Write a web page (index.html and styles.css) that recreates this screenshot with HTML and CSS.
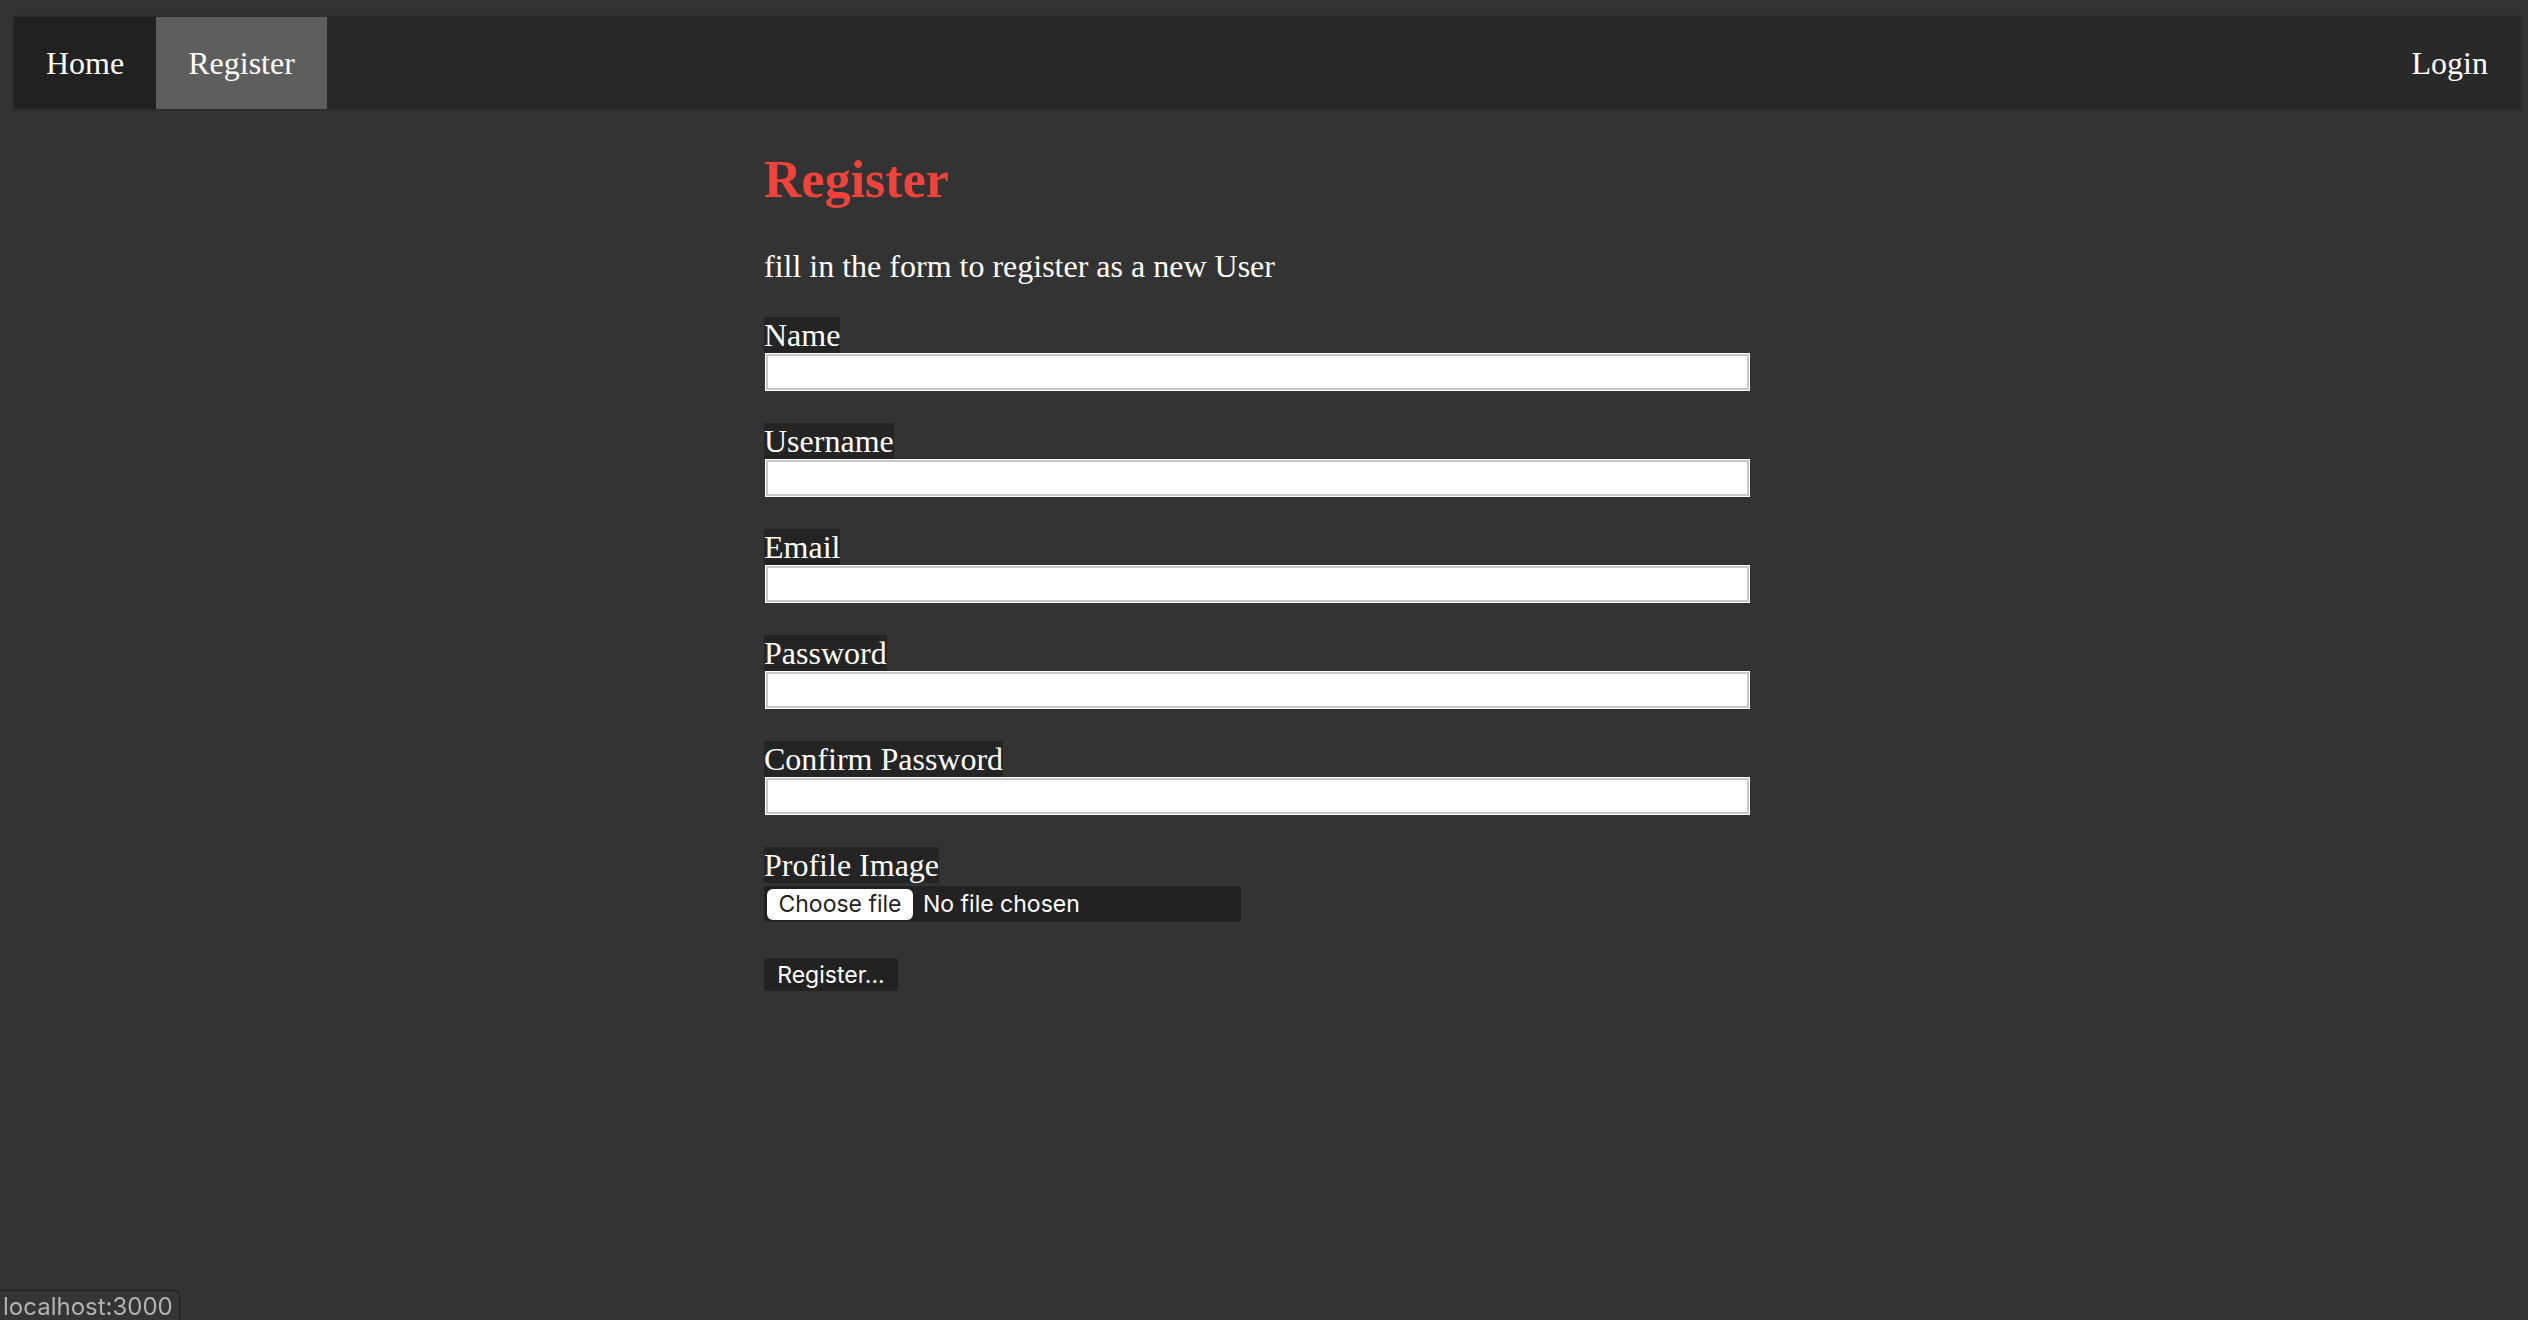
FILE: index.html
```html
<!DOCTYPE html>
<html lang="en">
<head>
<meta charset="utf-8">
<title>Register</title>
<link rel="stylesheet" href="styles.css">
</head>
<body>
<nav class="topnav">
  <a class="nav-item" href="#">Home</a>
  <a class="nav-item active" href="#">Register</a>
  <span class="nav-spacer"></span>
  <a class="nav-item" href="#">Login</a>
</nav>
<main class="main">
  <h2 class="title">Register</h2>
  <p class="intro">fill in the form to register as a new User</p>
  <form class="form">
    <div class="field">
      <label class="label">Name</label>
      <input class="text-input" type="text">
    </div>
    <div class="field">
      <label class="label">Username</label>
      <input class="text-input" type="text">
    </div>
    <div class="field">
      <label class="label">Email</label>
      <input class="text-input" type="text">
    </div>
    <div class="field">
      <label class="label">Password</label>
      <input class="text-input" type="password">
    </div>
    <div class="field">
      <label class="label">Confirm Password</label>
      <input class="text-input" type="password">
    </div>
    <div class="field">
      <label class="label">Profile Image</label>
      <div class="file-input">
        <span class="file-btn">Choose file</span>
        <span class="file-text">No file chosen</span>
      </div>
    </div>
    <div class="submit-row">
      <span class="submit-btn">Register...</span>
    </div>
  </form>
</main>
<div class="status">localhost:3000</div>
</body>
</html>
```
FILE: styles.css
```css
html, body {
  height: 100%;
}
body {
  margin: 0;
  background: #333333;
  color: #ffffff;
  font-family: "Liberation Serif", "Times New Roman", serif;
  font-size: 32px;
}
.topnav {
  display: flex;
  align-items: stretch;
  height: 92px;
  margin: 15px 5px 0 12px;
  border: 2px solid #2d2d2d;
  background: #292929;
}
.nav-item {
  display: flex;
  align-items: center;
  padding: 0 32px;
  color: #ffffff;
  text-decoration: none;
  background: #212121;
  font-size: 32px;
}
.nav-item:last-child {
  background: transparent;
  padding-right: 33px;
}
.nav-item.active {
  background: #5e5e5e;
}
.nav-spacer {
  flex: 1;
}
.main {
  width: 1000px;
  margin: 0 auto;
}
.title {
  margin: 39px 0 0;
  color: #f1433c;
  font-size: 52px;
  font-weight: bold;
  line-height: 60px;
}
.intro {
  margin: 38px 0 0;
  font-size: 32px;
  line-height: 37px;
}
.form {
  margin-top: 32px;
  display: flex;
  flex-direction: column;
}
.field {
  display: flex;
  flex-direction: column;
  align-items: flex-start;
  margin-bottom: 32px;
}
.label {
  background: #242424;
  line-height: 36px;
  font-size: 32px;
}
.text-input {
  box-sizing: border-box;
  width: 983px;
  height: 36px;
  margin: 1px 1px 1px 2px;
  border: 2px solid #c8c8c8;
  box-shadow: 0 0 0 1px #ffffff;
  background: #ffffff;
  padding: 0;
}
.file-input {
  display: flex;
  align-items: center;
  gap: 10px;
  width: 477px;
  height: 36px;
  margin-top: 3px;
  background: #222222;
  border-radius: 4px;
  font-family: Inter, "Liberation Sans", sans-serif;
  font-size: 23px;
}
.file-btn {
  display: flex;
  align-items: center;
  justify-content: center;
  margin-left: 3px;
  width: 146px;
  height: 31px;
  background: #ffffff;
  color: #222222;
  border-radius: 6px;
}
.file-text {
  color: #ffffff;
}
.submit-row {
  display: flex;
  margin-top: 4px;
}
.submit-btn {
  display: flex;
  align-items: center;
  justify-content: center;
  width: 134px;
  height: 33px;
  background: #222222;
  border-radius: 3px;
  color: #ffffff;
  font-family: Inter, "Liberation Sans", sans-serif;
  font-size: 23px;
}
.status {
  position: fixed;
  left: 0;
  bottom: 0;
  padding: 0 6px 0 3px;
  height: 29px;
  line-height: 31px;
  background: #353535;
  border-top: 1px solid #1e1e1e;
  border-right: 1px solid #1e1e1e;
  border-top-right-radius: 6px;
  color: #b2b2b2;
  font-family: Inter, "Liberation Sans", sans-serif;
  font-size: 24px;
  overflow: hidden;
}
```
